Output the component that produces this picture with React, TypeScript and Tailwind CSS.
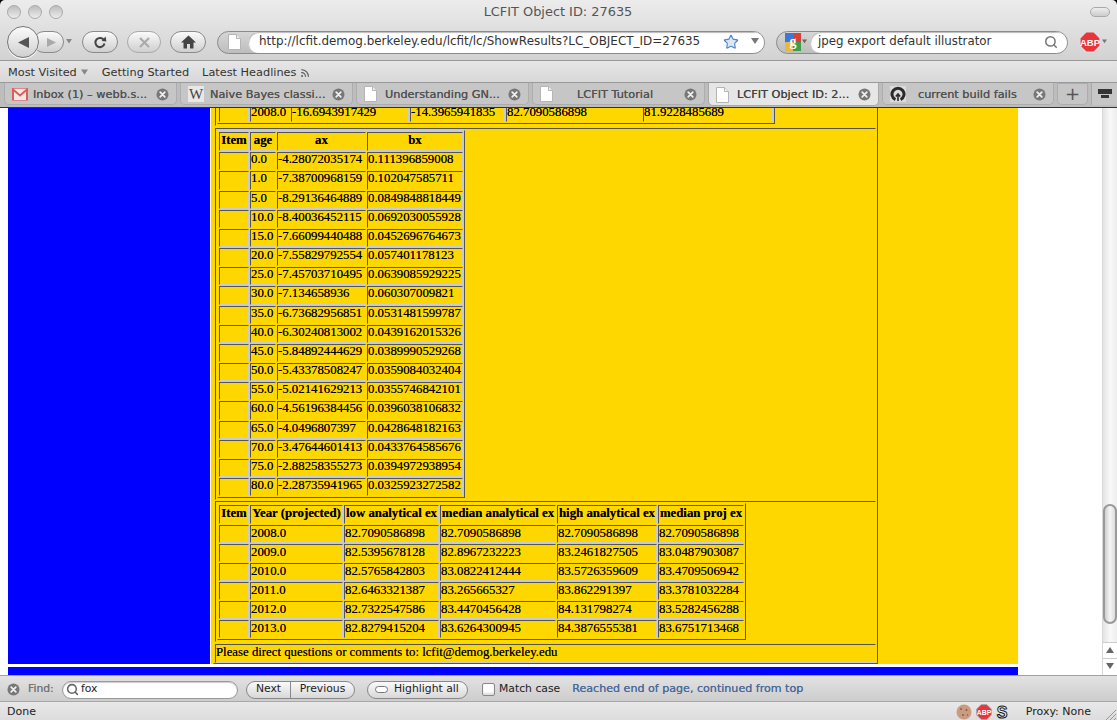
import { Search, Star, Rss } from "lucide-react";

type Row = string[];

const cellClass =
  "border border-t-[#555] border-l-[#555] border-r-[#ccc] border-b-[#ccc] p-0 align-top leading-[13px] whitespace-nowrap overflow-hidden";

const topCols = ["w-[30px]", "w-[40px]", "w-[118px]", "w-[95px]", "w-[136px]", "w-[130px]"];
const axCols = ["w-[30px]", "w-[26px]", "w-[89px]", "w-[96px]"];
const projCols = ["w-[30px]", "w-[93px]", "w-[95px]", "w-[116px]", "w-[100px]", "w-[86px]"];

const topRows: Row[] = [["", "2008.0", "-16.6943917429", "-14.3965941835", "82.7090586898", "81.9228485689"]];

const axRows: Row[] = [
  ["", "0.0", "-4.28072035174", "0.111396859008"],
  ["", "1.0", "-7.38700968159", "0.102047585711"],
  ["", "5.0", "-8.29136464889", "0.0849848818449"],
  ["", "10.0", "-8.40036452115", "0.0692030055928"],
  ["", "15.0", "-7.66099440488", "0.0452696764673"],
  ["", "20.0", "-7.55829792554", "0.057401178123"],
  ["", "25.0", "-7.45703710495", "0.0639085929225"],
  ["", "30.0", "-7.134658936", "0.060307009821"],
  ["", "35.0", "-6.73682956851", "0.0531481599787"],
  ["", "40.0", "-6.30240813002", "0.0439162015326"],
  ["", "45.0", "-5.84892444629", "0.0389990529268"],
  ["", "50.0", "-5.43378508247", "0.0359084032404"],
  ["", "55.0", "-5.02141629213", "0.0355746842101"],
  ["", "60.0", "-4.56196384456", "0.0396038106832"],
  ["", "65.0", "-4.0496807397", "0.0428648182163"],
  ["", "70.0", "-3.47644601413", "0.0433764585676"],
  ["", "75.0", "-2.88258355273", "0.0394972938954"],
  ["", "80.0", "-2.28735941965", "0.0325923272582"],
];

const projRows: Row[] = [
  ["", "2008.0", "82.7090586898", "82.7090586898", "82.7090586898", "82.7090586898"],
  ["", "2009.0", "82.5395678128", "82.8967232223", "83.2461827505", "83.0487903087"],
  ["", "2010.0", "82.5765842803", "83.0822412444", "83.5726359609", "83.4709506942"],
  ["", "2011.0", "82.6463321387", "83.265665327", "83.862291397", "83.3781032284"],
  ["", "2012.0", "82.7322547586", "83.4470456428", "84.131798274", "83.5282456288"],
  ["", "2013.0", "82.8279415204", "83.6264300945", "84.3876555381", "83.6751713468"],
];

function DataTable({
  cols,
  head,
  rows,
  rowClass = "h-[18.18px]",
}: {
  cols: string[];
  head?: string[];
  rows: Row[];
  rowClass?: string;
}) {
  return (
    <table className="table-fixed border-separate border-spacing-[1px] border border-t-[#ccc] border-l-[#ccc] border-r-[#555] border-b-[#555] w-max">
      <colgroup>
        {cols.map((c, i) => (
          <col key={i} className={c} />
        ))}
      </colgroup>
      <tbody>
        {head && (
          <tr>
            {head.map((h, i) => (
              <th key={i} className={`${cellClass} h-[19px] pt-[1px] font-bold text-center`}>
                {h}
              </th>
            ))}
          </tr>
        )}
        {rows.map((r, i) => (
          <tr key={i}>
            {r.map((v, j) => (
              <td key={j} className={`${cellClass} ${rowClass}`}>
                {v}
              </td>
            ))}
          </tr>
        ))}
      </tbody>
    </table>
  );
}

function Section({ children, className = "" }: { children: React.ReactNode; className?: string }) {
  return (
    <div className={`border border-t-[#555] border-l-[#555] border-r-[#ccc] border-b-[#ccc] ${className}`}>
      {children}
    </div>
  );
}

function CloseDot({ size = 13 }: { size?: number }) {
  return (
    <svg width={size} height={size} viewBox="0 0 13 13" className="shrink-0">
      <circle cx="6.5" cy="6.5" r="6" fill="#777" />
      <path d="M4.2 4.2l4.6 4.6M8.8 4.2l-4.6 4.6" stroke="#eee" strokeWidth="1.8" strokeLinecap="round" />
    </svg>
  );
}

function PageIcon() {
  return (
    <svg width="13" height="16" viewBox="0 0 13 16" className="shrink-0">
      <path d="M.5.5h8l4 4v11H.5z" fill="#fff" stroke="#b5b5b5" />
      <path d="M8.5.5v4h4" fill="#f0f0f0" stroke="#b5b5b5" />
    </svg>
  );
}

function GmailIcon() {
  return (
    <svg width="16" height="13" viewBox="0 0 16 13" className="shrink-0">
      <rect x="0.5" y="0.5" width="15" height="12" fill="#f4e8e6" stroke="#d88" />
      <path d="M1 12V1.5l7 6 7-6V12" fill="none" stroke="#d9605a" strokeWidth="2" />
    </svg>
  );
}

function WikiIcon() {
  return (
    <span className="w-4 h-4 bg-[#e8e8e8] flex items-center justify-center font-['Liberation_Serif'] text-[15px] leading-none text-[#444] shrink-0">
      W
    </span>
  );
}

function GithubIcon() {
  return (
    <svg width="16" height="16" viewBox="0 0 16 16" className="shrink-0">
      <rect width="16" height="16" fill="#dcdcdc" />
      <path d="M5.4 13.6A6 6 0 1 1 10.6 13.6" fill="none" stroke="#2b2b2b" strokeWidth="3" />
      <path d="M8 8v7M5.8 10.5L8 8l2.2 2.5" fill="none" stroke="#2b2b2b" strokeWidth="1.6" />
    </svg>
  );
}

function Tab({
  icon,
  title,
  active,
  className = "",
  textClass = "ml-[7px]",
}: {
  icon: React.ReactNode;
  title: string;
  active?: boolean;
  className?: string;
  textClass?: string;
}) {
  return (
    <div
      className={`h-[22px] pt-[1px] rounded-b-[5px] border border-t-0 flex items-center pl-[7px] pr-[7px] shrink-0 ${
        active
          ? "bg-[#e6e6e6] border-[#a8a8a8] text-[#444] h-[23px]"
          : "bg-[#c6c6c6] border-[#adadad] text-[#555] border-t border-t-[#9e9e9e]"
      } ${className}`}
    >
      {icon}
      <span className={`flex-1 text-[11.3px] pt-[2px] whitespace-nowrap [text-shadow:0_0_0.4px_#444] ${textClass}`}>{title}</span>
      <CloseDot />
    </div>
  );
}

function Triangle({ dir = "down", className = "" }: { dir?: "down" | "up" | "left" | "right"; className?: string }) {
  const pts = {
    down: "0,0 8,0 4,6",
    up: "0,6 8,6 4,0",
    left: "8,0 8,8 0,4",
    right: "0,0 0,8 8,4",
  }[dir];
  return (
    <svg width="8" height="8" viewBox="0 0 8 8" className={className}>
      <polygon points={pts} fill="currentColor" />
    </svg>
  );
}

function AbpIcon({ size = 22, outline = "#ddd" }: { size?: number; outline?: string }) {
  return (
    <svg width={size} height={size} viewBox="0 0 22 22" className="shrink-0">
      <polygon points="7,1 15,1 21,7 21,15 15,21 7,21 1,15 1,7" fill="#e8343a" stroke={outline} strokeWidth="1.2" />
      <text x="11" y="14.5" textAnchor="middle" fontSize="9.5" fontWeight="700" fill="#fff" fontFamily="Liberation Sans, sans-serif">
        ABP
      </text>
    </svg>
  );
}

const chromeBtn =
  "h-[22px] rounded-full border border-[#8a8a8a] bg-gradient-to-b from-[#fafafa] to-[#cfcfcf] flex items-center justify-center shrink-0";

function Toolbar() {
  return (
    <div className="h-[36px] flex items-center pl-[7px]">
      <div className="flex items-center shrink-0">
        <div className="w-[32px] h-[32px] rounded-full border border-[#777] bg-gradient-to-b from-[#fbfbfb] to-[#d0d0d0] flex items-center justify-center z-10 shadow-[0_1px_0_#fff]">
          <svg width="13" height="13" viewBox="0 0 13 13">
            <polygon points="12,1 12,12 1,6.5" fill="#555" />
          </svg>
        </div>
        <div className={`${chromeBtn} w-[31px] -ml-[6px] pl-[6px]`}>
          <svg width="11" height="11" viewBox="0 0 11 11">
            <polygon points="1,1 1,10 10,5.5" fill="#aaa" />
          </svg>
        </div>
        <Triangle className="ml-[2px] text-[#888] w-[6px]" />
      </div>
      <div className={`${chromeBtn} w-[36px] ml-[10px]`}>
        <svg width="14" height="14" viewBox="0 0 14 14">
          <path d="M11 5.2A4.6 4.6 0 1 0 11.5 8.5" fill="none" stroke="#444" strokeWidth="2" />
          <polygon points="8.6,6 13.4,6.4 12.6,1.6" fill="#444" />
        </svg>
      </div>
      <div className={`${chromeBtn} w-[34px] ml-[9px] border-[#aaa]`}>
        <svg width="13" height="13" viewBox="0 0 13 13">
          <path d="M2 2l9 9M11 2l-9 9" stroke="#aaa" strokeWidth="2.2" />
        </svg>
      </div>
      <div className={`${chromeBtn} w-[36px] ml-[9px]`}>
        <svg width="15" height="14" viewBox="0 0 15 14">
          <polygon points="7.5,0.5 15,7.5 12.5,7.5 12.5,13.5 9,13.5 9,9 6,9 6,13.5 2.5,13.5 2.5,7.5 0,7.5" fill="#444" />
        </svg>
      </div>
      <div className="h-[23px] w-[548px] ml-[11px] rounded-full border border-[#8a8a8a] bg-gradient-to-b from-[#d6d6d6] to-[#bdbdbd] flex items-center shrink-0 overflow-hidden">
        <span className="w-[30px] pl-[10px] shrink-0">
          <PageIcon />
        </span>
        <div className="flex-1 h-full bg-white rounded-l-full flex items-center pl-[11px] pr-[5px] shadow-[inset_1px_1px_1px_#bbb]">
          <span className="flex-1 text-[11.95px] text-[#333] whitespace-nowrap">
            http://lcfit.demog.berkeley.edu/lcfit/lc/ShowResults?LC_OBJECT_ID=27635
          </span>
          <Star size={16} className="text-[#4c84cc] fill-[#dbe8f7]" strokeWidth={1.7} />
          <Triangle className="ml-[12px] text-[#777]" />
        </div>
      </div>
      <div className="h-[23px] w-[292px] ml-[11px] rounded-full border border-[#8a8a8a] bg-gradient-to-b from-[#d6d6d6] to-[#bdbdbd] flex items-center shrink-0 overflow-hidden">
        <span className="pl-[8px] w-[33px] flex items-center shrink-0">
          <svg width="16" height="18" viewBox="0 0 16 18" className="shrink-0">
            <rect width="8" height="9" fill="#3b78d8" />
            <rect x="8" width="8" height="9" fill="#d8403a" />
            <rect y="9" width="8" height="9" fill="#e8b93a" />
            <rect x="8" y="9" width="8" height="9" fill="#3f9e4d" />
            <text x="8" y="13" textAnchor="middle" fontSize="14" fontWeight="700" fill="#fff" fontFamily="Liberation Serif, serif">
              g
            </text>
          </svg>
          <Triangle className="text-[#666] w-[5px] ml-[1px] shrink-0" />
        </span>
        <div className="flex-1 h-full bg-white rounded-l-full flex items-center pl-[8px] pr-[9px] shadow-[inset_1px_1px_1px_#bbb]">
          <span className="flex-1 text-[11.8px] text-[#333] whitespace-nowrap">jpeg export default illustrator</span>
          <Search size={14} className="text-[#777]" strokeWidth={2.6} />
        </div>
      </div>
      <span className="ml-[11px] flex">
        <AbpIcon />
      </span>
      <Triangle className="text-[#777] w-[5px] ml-[1px]" />
    </div>
  );
}

function Scrollbar() {
  return (
    <div className="w-[15px] shrink-0 flex flex-col border-l border-[#d8d8d8] bg-gradient-to-r from-[#e4e4e4] via-[#f8f8f8] to-[#ededed]">
      <div className="h-[396px]" />
      <div className="h-[120px] rounded-full border-[2px] border-[#9a9a9a] bg-gradient-to-r from-[#cfcfcf] via-[#f6f6f6] to-[#dcdcdc]" />
      <div className="flex-1" />
      <div className="h-[16px] bg-white border-t border-[#ccc] flex items-center justify-center text-[#666]">
        <Triangle dir="up" />
      </div>
      <div className="h-[17px] bg-white border-t border-[#ccc] flex items-center justify-center text-[#666]">
        <Triangle />
      </div>
    </div>
  );
}

const boldish = "[text-shadow:0_0_0.5px_currentColor]";

export default function App() {
  return (
    <div className="w-[1117px] h-[720px] overflow-hidden bg-black font-['DejaVu_Sans',sans-serif] flex flex-col">
      {/* window chrome */}
      <div className="rounded-t-[5px] bg-gradient-to-b from-[#ececec] to-[#d2d2d2] border-b border-[#989898] h-[61px] shrink-0">
        <div className="h-[24px] flex items-center pl-[7px] pr-[7px]">
          <div className="flex gap-[7px] w-[200px]">
            {[0, 1, 2].map((i) => (
              <span key={i} className="w-[14px] h-[14px] rounded-full border border-[#aaa] bg-gradient-to-b from-[#bdbdbd] to-[#ececec]" />
            ))}
          </div>
          <span className="flex-1 text-center text-[12.9px] text-[#555] ml-[9px] whitespace-nowrap">LCFIT Object ID: 27635</span>
          <span className="w-[20px] h-[10px] rounded-full border border-[#aaa] bg-gradient-to-b from-[#eee] to-[#ccc] ml-[190px]" />
        </div>
        <Toolbar />
      </div>
      <div className="h-[22px] shrink-0 pt-[3px] bg-gradient-to-b from-[#e6e6e6] to-[#d8d8d8] border-b border-[#9a9a9a] flex items-center pl-[8px] text-[11.3px] text-[#333]">
        <span>Most Visited</span>
        <Triangle className="ml-[4px] text-[#888] w-[7px]" />
        <span className="ml-[14px]">Getting Started</span>
        <span className="ml-[13px]">Latest Headlines</span>
        <Rss size={10} className="ml-[4px] text-[#555]" strokeWidth={2.6} />
      </div>
      <div className="h-[25px] shrink-0 bg-[#bdbdbd] border-b border-[#333] flex items-start pl-[4px] gap-[3px]">
        <Tab className="w-[173px]" icon={<GmailIcon />} title="Inbox (1) – webb.s..." textClass="ml-[5px]" />
        <Tab className="w-[173px]" icon={<WikiIcon />} title="Naive Bayes classi..." textClass="ml-[6px]" />
        <Tab className="w-[173px]" icon={<PageIcon />} title="Understanding GN..." textClass="ml-[8px]" />
        <Tab className="w-[173px]" icon={<PageIcon />} title="LCFIT Tutorial" textClass="ml-[24px]" />
        <Tab className="w-[171px]" active icon={<PageIcon />} title="LCFIT Object ID: 2..." textClass="ml-[8px]" />
        <Tab className="w-[172px]" icon={<GithubIcon />} title="current build fails" textClass="ml-[12px]" />
        <div className="w-[31px] h-[22px] rounded-b-[5px] border border-[#adadad] bg-[#c6c6c6] flex items-center justify-center text-[#555] text-[18px] leading-none shrink-0">
          +
        </div>
        <div className="flex-1 h-[22px] flex flex-col items-center pt-[6px] gap-[1px] border-l border-[#aaa] bg-[#c6c6c6]">
          <span className="w-[14px] h-[5px] bg-[#333]" />
          <span className="w-[8px] h-[3px] bg-[#333]" />
        </div>
      </div>

      {/* page */}
      <div className="h-[567px] shrink-0 bg-white flex overflow-hidden">
        <div className="flex-1 min-w-0 pl-[8px] font-['Liberation_Serif',serif] text-[12.8px] leading-[15px] text-black [text-shadow:0_0_0.4px_rgba(0,0,0,0.7)]">
          <div className="flex h-[556px] w-[1010px]">
            <div className="w-[202px] bg-[#0000ff] shrink-0" />
            <div className="w-[807px] ml-[1px] bg-[#ffd700] pl-[2px] overflow-hidden">
              <div className="w-[665px] -mt-[10px] border border-t-[#ccc] border-l-[#ccc] border-r-[#555] border-b-[#555] p-[1px] pb-0 flex flex-col gap-[2px]">
                <Section className="p-[1px]">
                  <DataTable cols={topCols} rows={topRows} rowClass="h-[18.18px] pt-[1px]" />
                </Section>
                <Section className="p-[1px]">
                  <DataTable cols={axCols} head={["Item", "age", "ax", "bx"]} rows={axRows} />
                </Section>
                <Section className="p-[1px] -mt-[1px]">
                  <DataTable
                    cols={projCols}
                    head={["Item", "Year (projected)", "low analytical ex", "median analytical ex", "high analytical ex", "median proj ex"]}
                    rows={projRows}
                    rowClass="h-[18px] pt-[1px]"
                  />
                </Section>
                <Section className="h-[19px] pb-[3px] flex items-center">Please direct questions or comments to: lcfit@demog.berkeley.edu</Section>
              </div>
            </div>
          </div>
          <div className="mt-[3px] h-[8px] w-[1010px] bg-[#0000ff]" />
        </div>
        <Scrollbar />
      </div>

      {/* find bar */}
      <div className="h-[27px] pt-[2px] shrink-0 bg-gradient-to-b from-[#e2e2e2] to-[#cdcdcd] border-t border-[#a0a0a0] border-b border-b-[#a8a8a8] flex items-center pl-[7px] text-[10.8px] text-[#222]">
        <CloseDot />
        <span className={`ml-[8px] text-[#777] w-[28px] ${boldish}`}>Find:</span>
        <div className="ml-[6px] w-[176px] h-[18px] rounded-full border border-[#999] bg-white flex items-center pl-[3px] shadow-[inset_0_1px_1px_#ccc]">
          <Search size={13} className="text-[#666]" strokeWidth={2.8} />
          <span className="ml-[2px]">fox</span>
        </div>
        <div className="ml-[8px] w-[109px] h-[18px] rounded-full border border-[#888] bg-gradient-to-b from-[#fafafa] to-[#d8d8d8] flex items-center">
          <span className="w-[44px] text-center border-r border-[#888] h-full flex items-center justify-center">Next</span>
          <span className="flex-1 text-center">Previous</span>
        </div>
        <div className="ml-[12px] w-[101px] h-[18px] rounded-full border border-[#888] bg-gradient-to-b from-[#fafafa] to-[#d8d8d8] flex items-center pl-[7px]">
          <span className="w-[13px] h-[7px] rounded-full border border-[#777] bg-white shrink-0" />
          <span className="ml-[6px] whitespace-nowrap">Highlight all</span>
        </div>
        <span className="ml-[14px] w-[13px] h-[13px] rounded-[2px] border border-[#888] bg-white shadow-[inset_0_-2px_2px_#ddd]" />
        <span className="ml-[4px]">Match case</span>
        <span className={`ml-[12px] text-[11.1px] text-[#4a6a9c] whitespace-nowrap ${boldish}`}>Reached end of page, continued from top</span>
      </div>

      {/* status bar */}
      <div className="flex-1 pt-[2px] bg-gradient-to-b from-[#e8e8e8] to-[#dcdcdc] flex items-center pl-[7px] text-[11px] text-[#222]">
        <span className="flex-1">Done</span>
        <svg width="16" height="16" viewBox="0 0 16 16" className="shrink-0">
          <circle cx="8" cy="8" r="7.5" fill="#c99b80" />
          <circle cx="5" cy="5" r="1" fill="#8a5c48" />
          <circle cx="10.5" cy="6" r="1" fill="#8a5c48" />
          <circle cx="7" cy="11" r="1" fill="#8a5c48" />
          <circle cx="11.5" cy="11" r="0.8" fill="#8a5c48" />
        </svg>
        <span className="ml-[4px] flex">
          <AbpIcon size={16} outline="#999" />
        </span>
        <svg width="14" height="15" viewBox="0 0 14 15" className="ml-[3px] shrink-0">
          <text x="7" y="13" textAnchor="middle" fontSize="16" fontWeight="700" fill="#fff" stroke="#111" strokeWidth="1" fontFamily="Liberation Sans, sans-serif">
            S
          </text>
        </svg>
        <span className="ml-[17px] whitespace-nowrap">Proxy: None</span>
        <svg width="12" height="12" viewBox="0 0 12 12" className="ml-[14px] self-end shrink-0">
          <path d="M11 1L1 11M11 5L5 11M11 9L9 11" stroke="#999" />
        </svg>
      </div>
    </div>
  );
}
